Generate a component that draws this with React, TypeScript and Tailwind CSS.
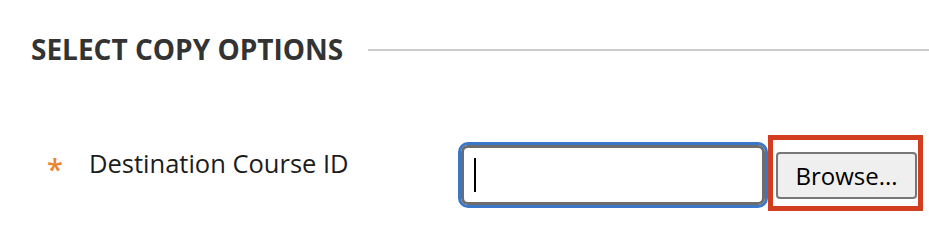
export default function App() {
  return (
    <div className="w-[929px] h-[222px] bg-white overflow-hidden font-['Open_Sans',sans-serif]">
      {/* section heading with rule */}
      <div className="flex items-center pl-[31px] pt-[35px]">
        <h2 className="text-[28px] leading-none font-bold text-[#333333] whitespace-nowrap">
          SELECT COPY OPTIONS
        </h2>
        <div className="flex-1 h-[2px] bg-[#cccccc] ml-[25px] mt-[1px]" />
      </div>

      {/* destination field row */}
      <div className="flex items-start mt-[72px]">
        <div className="w-[458px] flex items-start pl-[47px] pt-[16px]">
          <span className="w-[42px] mt-[3px] text-[29px] leading-none font-semibold text-[#ec8530]">*</span>
          <label className="text-[25.5px] leading-none text-[#1c1c1c] whitespace-nowrap">
            Destination Course ID
          </label>
        </div>

        <div className="mt-[7px] w-[310px] h-[66px] rounded-[10px] border-[3px] border-[#3a77c9]">
          <div className="h-full rounded-[7px] border-[3px] border-[#6d6d6d] bg-white flex items-center pl-[10px]">
            <span className="w-[2px] h-[34px] bg-black" />
          </div>
        </div>

        <div className="w-[155px] h-[76px] border-[5px] border-[#d33d1f] pl-[3px] pt-[12px]">
          <button className="w-[141px] h-[47px] rounded-[4px] border-2 border-[#777777] bg-[#efefef] text-[24px] leading-none text-black">
            Browse...
          </button>
        </div>
      </div>
    </div>
  )
}
